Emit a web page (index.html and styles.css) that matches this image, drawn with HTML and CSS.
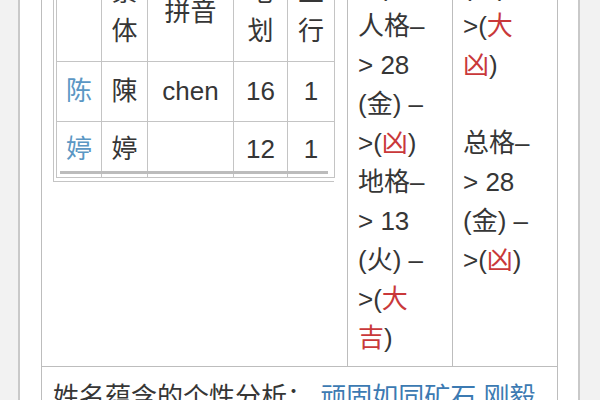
FILE: index.html
```html
<!DOCTYPE html>
<html lang="zh-CN">
<head>
<meta charset="utf-8">
<title>姓名分析</title>
<link rel="stylesheet" href="styles.css">
</head>
<body>
<div class="page">
  <table class="info">
    <colgroup><col class="c1"><col class="c2"><col class="c3"></colgroup>
    <tr>
      <td class="names">
        <div class="scroller">
          <table class="chars">
            <colgroup><col class="k1"><col class="k2"><col class="k3"><col class="k4"><col class="k5"></colgroup>
            <tr><th></th><th>繁<br>体</th><th>拼音</th><th>笔<br>划</th><th>五<br>行</th></tr>
            <tr><td><span class="link">陈</span></td><td>陳</td><td>chen</td><td>16</td><td>1</td></tr>
            <tr class="last"><td><span class="link">婷</span></td><td>婷</td><td></td><td>12</td><td>1</td></tr>
          </table>
        </div>
      </td>
      <td class="ge">天格–<br>&gt; 17<br>(金) –<br>&gt;(<span class="bad">大</span><br><span class="bad">凶</span>)<br>人格–<br>&gt; 28<br>(金) –<br>&gt;(<span class="bad">凶</span>)<br>地格–<br>&gt; 13<br>(火) –<br>&gt;(<span class="bad">大</span><br><span class="bad">吉</span>)</td>
      <td class="ge">&nbsp;<br>&nbsp;<br>外格–<br>&gt; 2<br>(木) –<br>&gt;(<span class="bad">大</span><br><span class="bad">凶</span>)<br>&nbsp;<br>总格–<br>&gt; 28<br>(金) –<br>&gt;(<span class="bad">凶</span>)</td>
    </tr>
    <tr>
      <td class="analysis" colspan="3">姓名蕴含的个性分析： <span class="blue">顽固如同矿石 刚毅</span></td>
    </tr>
  </table>
</div>
</body>
</html>
```

FILE: styles.css
```css
html, body {
  margin: 0;
  padding: 0;
}
body {
  background: #f2f2f2;
  font-family: "Liberation Sans", "Noto Sans CJK SC", sans-serif;
  font-size: 26px;
  line-height: 39px;
  color: #363636;
  overflow: hidden;
  height: 400px;
}
.page {
  margin: -197px 0 0 18px;
  width: 517px;
  padding: 0 20px 40px 21px;
  background: #fff;
  border-left: 2px solid #c9c9c9;
  border-right: 2px solid #c9c9c9;
}
.info {
  border-collapse: collapse;
  table-layout: fixed;
  width: 516px;
  border: 1px solid #bdbdbd;
}
.info .c1 { width: 306px; }
.info .c2 { width: 105px; }
.info .c3 { width: 105px; }
.info > tbody > tr > td {
  border: 1px solid #bdbdbd;
  vertical-align: top;
}
.names {
  padding: 8px 0 0 11px;
}
.ge {
  padding: 8px 4px 8px 10px;
  white-space: nowrap;
}
.scroller {
  margin-top: 149px;
  width: 281px;
  border-left: 1px solid #c4c4c4;
  border-bottom: 1px solid #c4c4c4;
  padding: 0 0 3px 2px;
  position: relative;
  box-sizing: border-box;
}
.scroller::after {
  content: "";
  position: absolute;
  left: 6px;
  right: 6px;
  bottom: 7px;
  height: 3px;
  background: #bcbcbc;
}
.chars {
  border-collapse: collapse;
  table-layout: fixed;
  width: 278px;
}
.chars .k1 { width: 45px; }
.chars .k2 { width: 46px; }
.chars .k3 { width: 86px; }
.chars .k4 { width: 54px; }
.chars .k5 { width: 47px; }
.chars th, .chars td {
  border: 1px solid #c4c4c4;
  padding: 10px 0;
  text-align: center;
  vertical-align: middle;
  font-weight: normal;
}
.chars tr:first-child th {
  padding: 11px 0 10px;
}
.chars .last td {
  padding: 8px 0 8px;
}
.link {
  color: #5b97c4;
}
.bad {
  color: #c9383a;
}
.analysis {
  padding: 11px 10px 0 11px;
  white-space: nowrap;
}
.blue {
  color: #3c7ab2;
}
```
